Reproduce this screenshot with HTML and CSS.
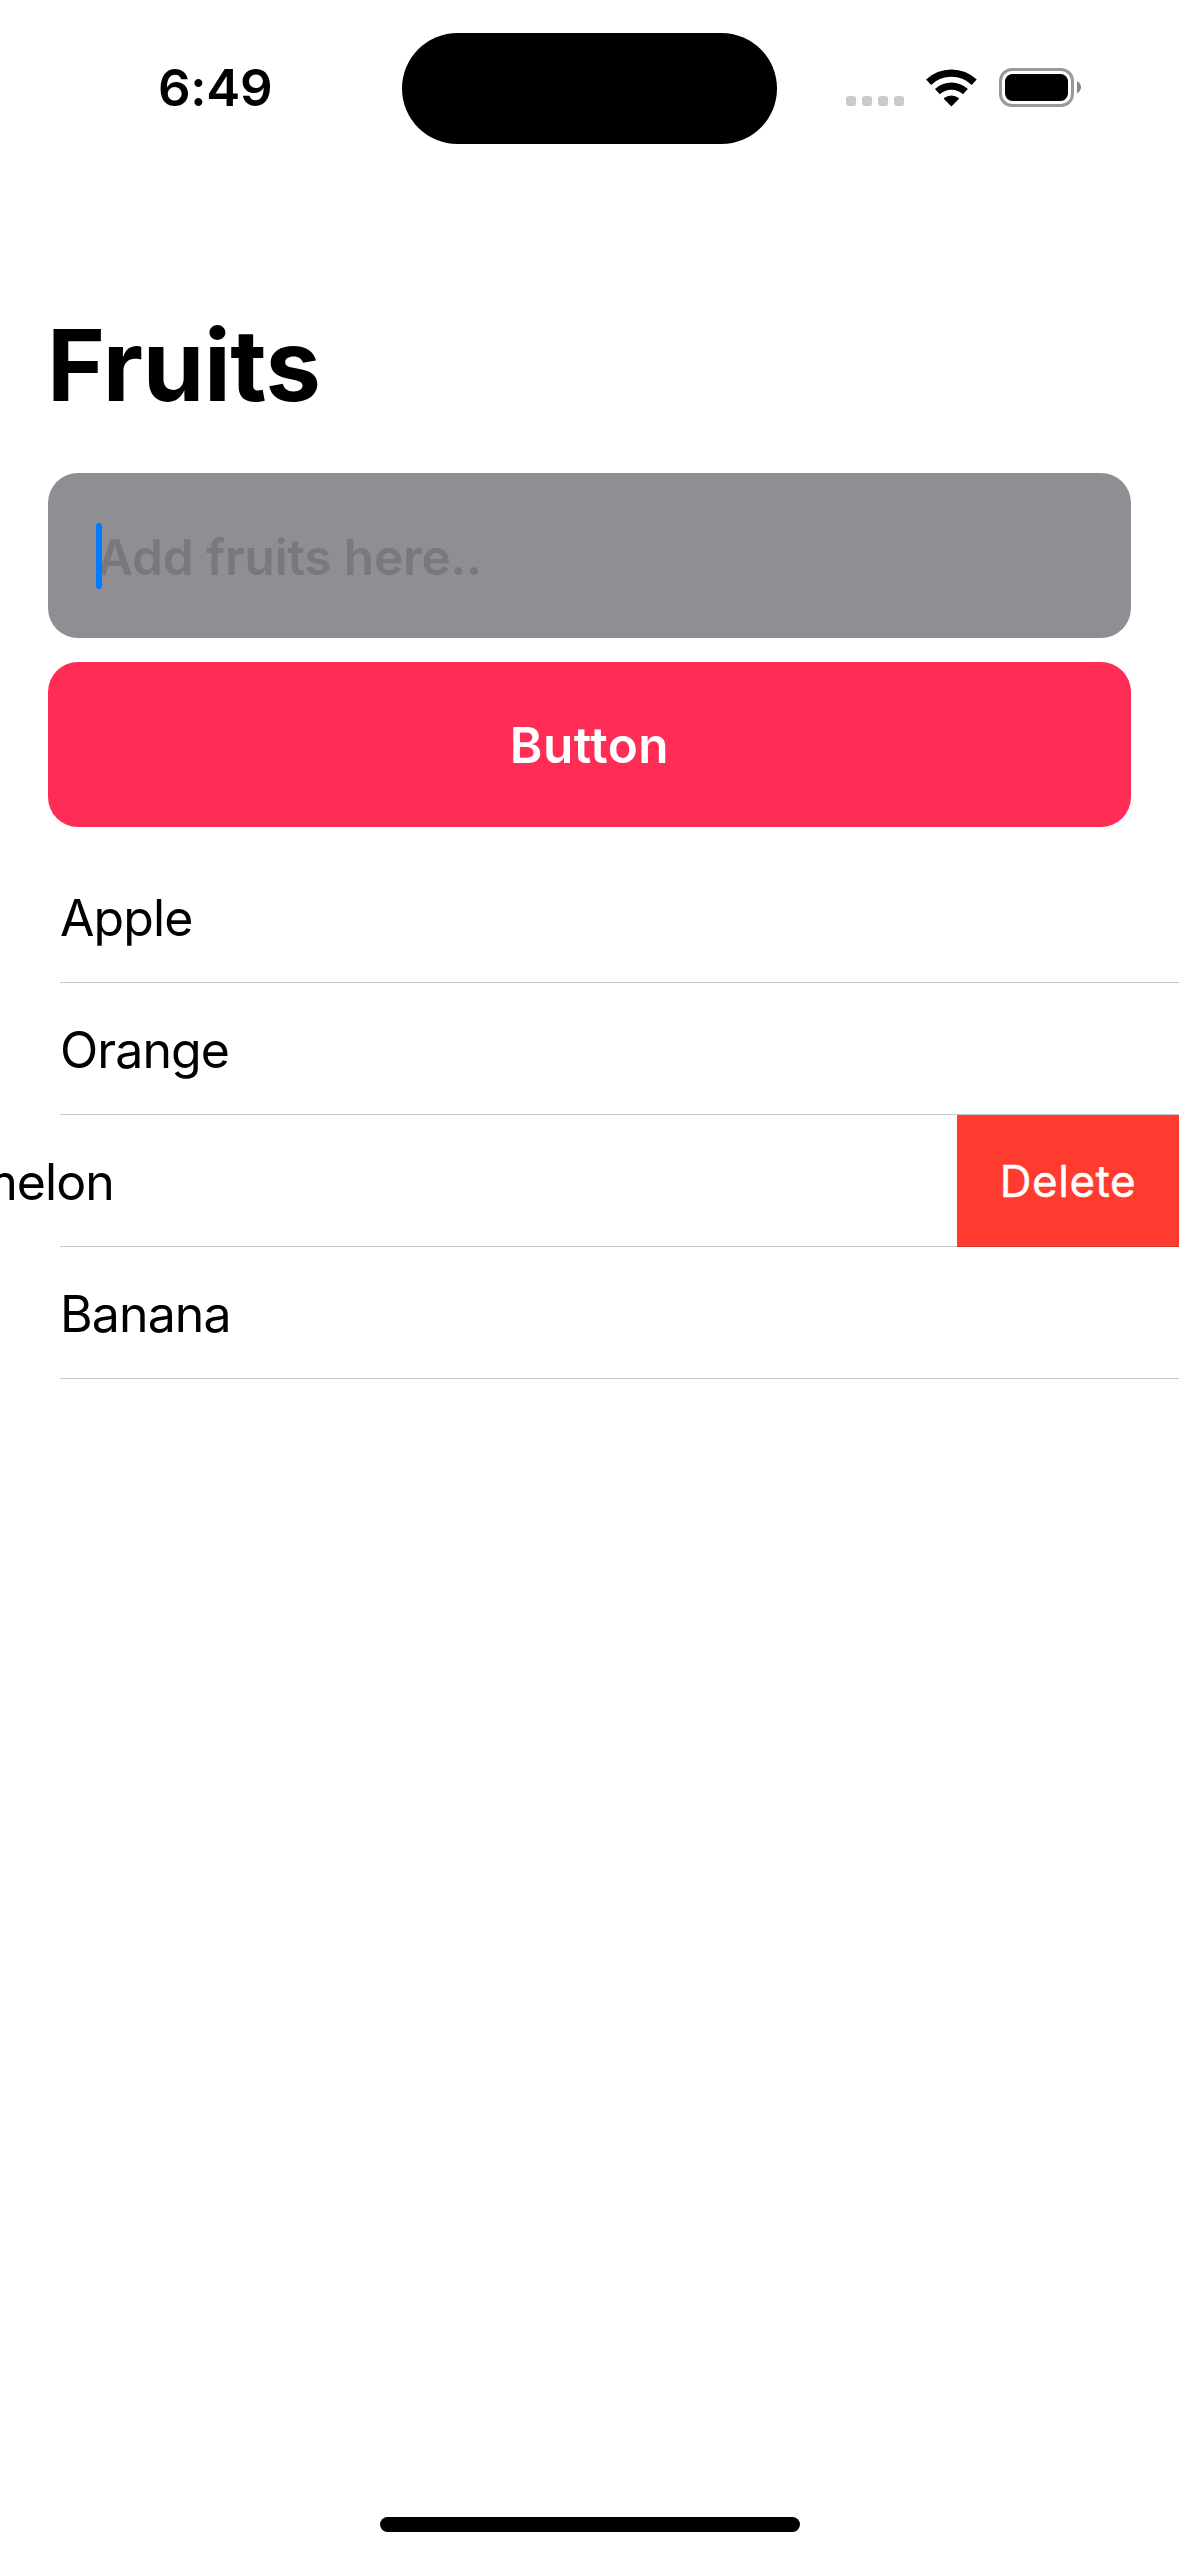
FILE: index.html
```html
<!DOCTYPE html>
<html lang="en">
<head>
<meta charset="utf-8">
<title>Fruits</title>
<link rel="stylesheet" href="styles.css">
</head>
<body>
<div class="screen">
  <header class="status-bar">
    <div class="time"><span class="clock">6:49</span></div>
    <div class="island"></div>
    <div class="indicators">
      <svg class="cellular" width="58" height="10" viewBox="0 0 58 10" fill="#cbcbcb">
        <rect width="10" height="10" rx="3"/><rect x="16" width="10" height="10" rx="3"/><rect x="32" width="10" height="10" rx="3"/><rect x="48" width="10" height="10" rx="3"/>
      </svg>
      <svg class="wifi" width="51" height="38" viewBox="0 0 51 38">
        <g fill="none" stroke="#000">
          <path d="M2.6 13.2A33.2 33.2 0 0 1 48.2 13.2" stroke-width="7.4"/>
          <path d="M11.4 22.6A20.4 20.4 0 0 1 39.4 22.6" stroke-width="7.2"/>
        </g>
        <path d="M25.4 36.4L18.5 29.6A11 11 0 0 1 32.3 29.6Z" stroke="#000" stroke-width="1.4" stroke-linejoin="round"/>
      </svg>
      <svg class="battery" width="82" height="39" viewBox="0 0 82 39">
        <rect x="1.5" y="1.5" width="72" height="36" rx="11.5" fill="none" stroke="#999" stroke-width="3"/>
        <rect x="6" y="6" width="63" height="27" rx="7.5"/>
        <path d="M78 13.2C80.5 14.3 82 16.7 82 19.2S80.5 24.3 78 25.4Z" fill="#868686"/>
      </svg>
    </div>
  </header>
  <main class="content">
    <h1 class="title">Fruits</h1>
    <div class="form">
      <div class="field"><span class="caret"></span><span class="placeholder">Add fruits here..</span></div>
      <div class="button"><span>Button</span></div>
    </div>
    <ul class="list">
      <li class="row"><span class="label">Apple</span></li>
      <li class="row"><span class="label">Orange</span></li>
      <li class="row swiped"><span class="label melon">Watermelon</span><div class="delete"><span>Delete</span></div></li>
      <li class="row"><span class="label">Banana</span></li>
    </ul>
  </main>
  <footer class="home"><div class="home-bar"></div></footer>
</div>
</body>
</html>
```
FILE: styles.css
```css
* { box-sizing: border-box; }
body {
  margin: 0;
  background: #fff;
  color: #000;
  font-family: Inter, "Liberation Sans", sans-serif;
}
.screen {
  width: 1179px;
  height: 2556px;
  display: flex;
  flex-direction: column;
  overflow: hidden;
}
.status-bar {
  height: 177px;
  padding-top: 33px;
  display: grid;
  grid-template-columns: 402px 375px 402px;
}
.time { padding-left: 158px; }
.clock {
  display: block;
  font-size: 51px;
  font-weight: 600;
  line-height: 60px;
  margin-top: 25px;
  letter-spacing: -0.3px;
}
.island {
  height: 111px;
  border-radius: 56px;
  background: #000;
}
.indicators {
  display: flex;
  align-items: flex-start;
  padding: 35px 0 0 69px;
}
.cellular { margin-top: 28px; }
.wifi { margin: 1px 0 0 22px; }
.battery { margin-left: 22px; }
.content { flex: 1; }
.title {
  margin: 128px 0 0 47px;
  font-size: 99px;
  line-height: 120px;
  font-weight: 700;
  letter-spacing: -0.4px;
}
.form {
  margin-top: 48px;
  padding: 0 48px;
  display: grid;
  gap: 24px;
}
.field, .button {
  height: 165px;
  border-radius: 30px;
  display: flex;
  align-items: center;
  font-size: 49.5px;
  font-weight: 600;
  line-height: 60px;
}
.field {
  padding-left: 48px;
  background: #8e8e93;
  color: #78787d;
}
.caret {
  width: 6px;
  height: 66px;
  border-radius: 3px;
  background: #007aff;
  z-index: 1;
}
.placeholder {
  margin-left: -5px;
  padding-top: 2px;
  letter-spacing: -0.15px;
}
.button {
  justify-content: center;
  background: #ff2d55;
  color: #fff;
  letter-spacing: 0.5px;
}
.list {
  list-style: none;
  margin: 24px 0 0;
  padding: 0;
}
.row {
  height: 132px;
  display: flex;
  align-items: center;
  padding-left: 60px;
  font-size: 50px;
  line-height: 60px;
  background: linear-gradient(#c6c6c8, #c6c6c8) 60px 100% / 1119px 1px no-repeat;
}
.label {
  padding-top: 2px;
  letter-spacing: -0.9px;
  white-space: nowrap;
}
.swiped {
  padding-left: 0;
  justify-content: space-between;
  overflow: hidden;
}
.melon { margin-left: -161px; }
.delete {
  width: 222px;
  height: 132px;
  display: flex;
  align-items: center;
  justify-content: center;
  background: #ff3b30;
  color: #fff;
  font-size: 44px;
  letter-spacing: 0.5px;
  -webkit-text-stroke: 0.4px #fff;
  border-bottom: 1px solid #d33a30;
}
.home {
  height: 39px;
  display: flex;
  justify-content: center;
}
.home-bar {
  width: 420px;
  height: 15px;
  border-radius: 8px;
  background: #000;
}
```
